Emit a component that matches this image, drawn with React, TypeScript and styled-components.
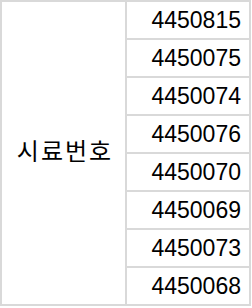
import styled, { createGlobalStyle } from "styled-components";

const GlobalStyle = createGlobalStyle`
  html, body {
    margin: 0;
    padding: 0;
    background: #ffffff;
  }
`;

const Sheet = styled.div`
  display: grid;
  grid-template-columns: 123px 122px;
  grid-auto-rows: 36px;
  gap: 2px;
  width: 247px;
  padding: 2px;
  background: #d9d9d9;
  font-family: "Malgun Gothic", "Noto Sans CJK KR", "Liberation Sans", sans-serif;
  color: #000000;
`;

const LabelCell = styled.div`
  grid-row: 1 / span 8;
  display: flex;
  justify-content: center;
  align-items: center;
  padding-left: 3px;
  padding-bottom: 8px;
  background: #ffffff;
  font-size: 24px;
  letter-spacing: 2px;
`;

const ValueCell = styled.div`
  display: flex;
  align-items: center;
  justify-content: flex-end;
  padding-right: 8px;
  background: #ffffff;
  font-family: "Liberation Sans", sans-serif;
  font-size: 23px;
`;

const samples = [
  "4450815",
  "4450075",
  "4450074",
  "4450076",
  "4450070",
  "4450069",
  "4450073",
  "4450068",
];

export default function App() {
  return (
    <>
      <GlobalStyle />
      <Sheet>
        <LabelCell>시료번호</LabelCell>
        {samples.map((id) => (
          <ValueCell key={id}>{id}</ValueCell>
        ))}
      </Sheet>
    </>
  );
}
